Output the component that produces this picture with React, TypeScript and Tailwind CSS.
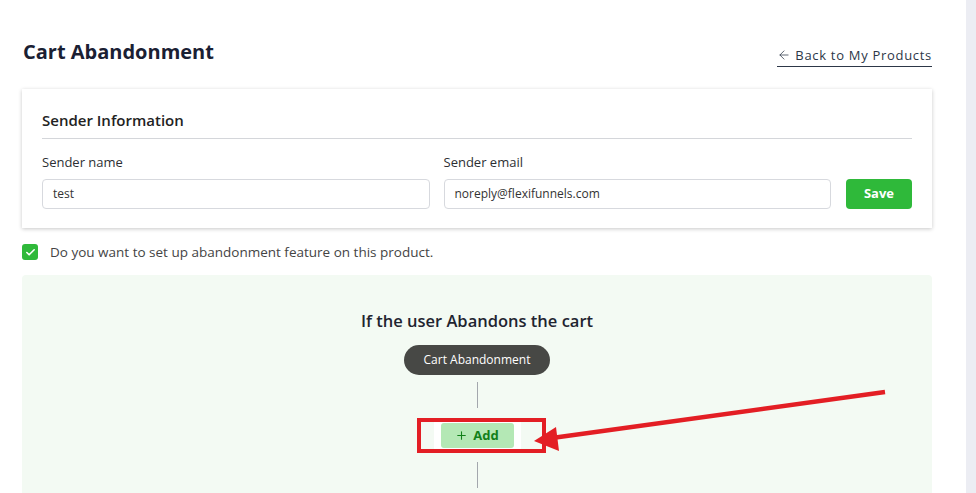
import { ArrowLeft, Check, Plus } from "lucide-react";

function Field({ label, value }: { label: string; value: string }) {
  return (
    <div className="flex-1">
      <div className="text-[13px] leading-5 text-[#2d2f33]">{label}</div>
      <div className="mt-[7px] h-[30px] rounded-[4px] border border-[#d7d9de] bg-white px-[10px] flex items-center text-[12px] text-[#333]">
        {value}
      </div>
    </div>
  );
}

function Connector() {
  return <div className="w-px h-[26px] bg-[#a3a7ad]" />;
}

export default function App() {
  return (
    <div
      className="relative flex w-[976px] h-[493px] overflow-hidden bg-white"
      style={{ fontFamily: '"Open Sans", "Noto Sans", sans-serif' }}
    >
      <div className="flex-1 pl-[22px] pr-[34px]">
        <div className="flex h-[28px] items-start justify-between mt-[38px]">
          <h1 className="ml-[1px] text-[20px] leading-7 font-bold text-[#1a2033]">Cart Abandonment</h1>
          <a className="mt-[7px] flex items-center gap-[4px] text-[13px] leading-5 tracking-[0.7px] text-[#2d3748] border-b border-[#2d3748] pb-[1px]">
            <ArrowLeft size={14} strokeWidth={1.3} />
            <span>Back to My Products</span>
          </a>
        </div>

        <div className="mt-[23px] bg-white shadow-[0_1px_4px_rgba(0,0,0,0.22)] px-[20px] pt-[20px] pb-[19px]">
          <div className="text-[15px] leading-[22px] font-semibold text-[#222] pb-[7px] border-b border-[#d4d6da]">
            Sender Information
          </div>
          <div className="mt-[13px] flex items-end gap-[14px]">
            <Field label="Sender name" value="test" />
            <Field label="Sender email" value="noreply@flexifunnels.com" />
            <button className="ml-[1px] h-[30px] w-[66px] rounded-[4px] bg-[#2fb93a] text-white text-[13px] font-bold">
              Save
            </button>
          </div>
        </div>

        <div className="mt-[16px] flex items-center gap-[12px]">
          <div className="w-[16px] h-[16px] rounded-[3px] bg-[#2fb93a] flex items-center justify-center">
            <Check size={11} strokeWidth={3.5} className="text-white" />
          </div>
          <span className="text-[13.5px] leading-4 text-[#444]">
            Do you want to set up abandonment feature on this product.
          </span>
        </div>

        <div className="mt-[15px] h-[240px] rounded-t-[4px] bg-[#f3faf3] flex flex-col items-center pt-[34px]">
          <div className="text-[16.5px] leading-6 font-semibold text-[#1f2430]">If the user Abandons the cart</div>
          <div className="mt-[12px] h-[30px] px-[20px] rounded-full bg-[#474845] text-white text-[12px] flex items-center">
            Cart Abandonment
          </div>
          <div className="mt-[7px]">
            <Connector />
          </div>
          <div className="relative mt-[12px] bg-white px-[7px] py-[3px]">
            <div className="absolute -left-[17px] -right-[25px] -top-[2px] -bottom-[2px] border-[4px] border-[#e31e24]" />
            <button className="relative h-[25px] w-[73px] rounded-[3px] bg-[#b4e8b5] text-[#12801a] text-[13px] font-bold flex items-center justify-center gap-[5px]">
              <Plus size={13} strokeWidth={2} />
              Add
            </button>
          </div>
          <div className="mt-[11px]">
            <Connector />
          </div>
        </div>
      </div>
      <div className="w-[10px] bg-[#ecedf3]" />

      <svg className="absolute inset-0 pointer-events-none" width={976} height={493}>
        <line x1={885} y1={392} x2={552} y2={438} stroke="#e31e24" strokeWidth={4.5} />
        <polygon points="534,441 556,427 559,451" fill="#e31e24" />
      </svg>
    </div>
  );
}
